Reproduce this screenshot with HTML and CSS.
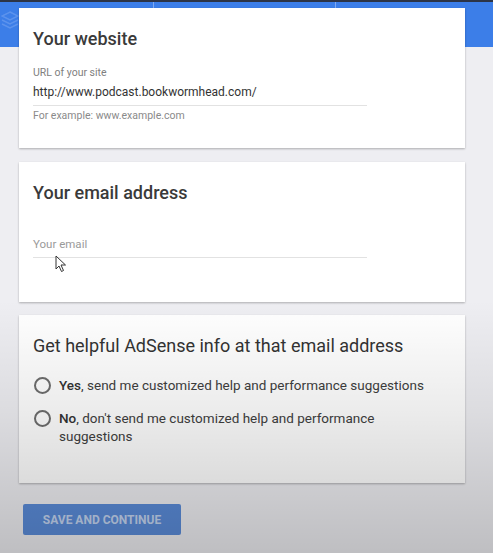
FILE: index.html
```html
<!DOCTYPE html>
<html lang="en">
<head>
    <meta charset="UTF-8">
    <meta name="viewport" content="width=device-width, initial-scale=1.0">
    <title>AdSense sign up</title>
    <link rel="stylesheet" href="styles.css">
</head>
<body>
    <div class="topbar"></div>
    <header class="band">
        <div class="tab tab-logo">
            <svg class="stack" width="18" height="20" viewBox="0 0 18 20">
                <path d="M9 2 L17 6 L9 10 L1 6 Z" fill="none" stroke="#6a9cf0" stroke-width="1.5"/>
                <path d="M1 10 L9 14 L17 10" fill="none" stroke="#6a9cf0" stroke-width="1.5"/>
                <path d="M1 14 L9 18 L17 14" fill="none" stroke="#6a9cf0" stroke-width="1.5"/>
            </svg>
        </div>
        <div class="tab tab-mid"></div>
        <div class="tab tab-end"></div>
    </header>

    <main class="content">
        <!-- Website -->
        <section class="card card-site">
            <h2 class="card-title">Your website</h2>
            <label class="field-label">URL of your site</label>
            <div class="field-value">http://www.podcast.bookwormhead.com/</div>
            <div class="field-hint">For example: www.example.com</div>
        </section>

        <!-- Email -->
        <section class="card card-email">
            <h2 class="card-title">Your email address</h2>
            <div class="field-value placeholder">Your email</div>
            <svg class="cursor" width="12" height="18" viewBox="0 0 12 18">
                <path d="M1 1 L1 14 L4 11 L6.5 16.5 L8.5 15.5 L6 10 L10.5 10 Z" fill="#fff" stroke="#333" stroke-width="1" stroke-linejoin="round"/>
            </svg>
        </section>

        <!-- Info -->
        <section class="card card-info">
            <h2 class="card-title light">Get helpful AdSense info at that email address</h2>
            <div class="option">
                <span class="radio"></span>
                <span class="option-text"><b>Yes</b>, send me customized help and performance suggestions</span>
            </div>
            <div class="option">
                <span class="radio"></span>
                <span class="option-text"><b>No</b>, don't send me customized help and performance suggestions</span>
            </div>
        </section>

        <button class="save" type="button">SAVE AND CONTINUE</button>
    </main>

    <div class="shade"></div>
</body>
</html>
```

FILE: styles.css
```css
body {
    font-family: Roboto, "Liberation Sans", Arial, sans-serif;
    margin: 0;
    padding: 0;
    background-color: #eeeef2;
    color: #333;
    height: 553px;
    overflow: hidden;
    position: relative;
}
.topbar {
    height: 2px;
    background: #2c3446;
}
.band {
    height: 45px;
    background: #3c7ee8;
    display: flex;
}
.tab {
    height: 100%;
}
.tab-logo {
    width: 153px;
    padding: 8px 0 0 1px;
    box-sizing: border-box;
}
.tab-mid {
    width: 181px;
    border-left: 1px solid #7fa9f0;
}
.tab-end {
    flex: 1;
    border-left: 1px solid #7fa9f0;
}
.stack {
    display: block;
    opacity: 0.7;
}
.content {
    margin-top: -39px;
    padding: 0 28px 0 19px;
    display: flex;
    flex-direction: column;
}
.card {
    background: #fff;
    box-shadow: 0 1px 2px rgba(0, 0, 0, 0.28);
    padding: 0 14px;
    box-sizing: border-box;
    position: relative;
}
.card-site {
    height: 140px;
}
.card-email {
    height: 140px;
    margin-top: 14px;
}
.card-info {
    height: 168px;
    margin-top: 13px;
}
.card-title {
    margin: 0;
    padding-top: 19px;
    font-size: 18px;
    font-weight: 500;
    line-height: 24px;
    color: #3a3a3a;
}
.card-title.light {
    font-weight: 400;
    color: #333;
}
.field-label {
    display: block;
    margin-top: 15px;
    font-size: 10.5px;
    color: #808080;
    line-height: 14px;
}
.field-value {
    width: 334px;
    font-size: 12px;
    line-height: 16px;
    padding: 4px 0 5px;
    border-bottom: 1px solid #e2e2e2;
    color: #333;
}
.field-value.placeholder {
    margin-top: 27px;
    font-size: 11.5px;
    color: #9a9a9a;
}
.field-hint {
    margin-top: 3px;
    font-size: 10.5px;
    color: #8a8a8a;
    line-height: 14px;
}
.cursor {
    position: absolute;
    left: 36px;
    top: 93px;
}
.option {
    display: flex;
    align-items: flex-start;
    gap: 8px;
    margin-top: 18px;
    padding-left: 1px;
}
.option + .option {
    margin-top: 15px;
}
.radio {
    width: 13px;
    height: 13px;
    border: 2px solid #6e6e6e;
    border-radius: 50%;
    flex-shrink: 0;
    margin-top: 1px;
}
.option-text {
    font-size: 13.5px;
    line-height: 18px;
    color: #404040;
    max-width: 376px;
}
.option-text b {
    font-weight: 500;
    color: #333;
}
.save {
    align-self: flex-start;
    margin: 21px 0 0 4px;
    width: 158px;
    height: 31px;
    border: 0;
    border-radius: 2px;
    background: #5a8bd8;
    color: #c4d5f0;
    font-family: Roboto, "Liberation Sans", Arial, sans-serif;
    font-size: 12px;
    font-weight: 700;
    padding: 0;
}
.shade {
    position: absolute;
    left: 0;
    right: 0;
    top: 300px;
    bottom: 0;
    background: linear-gradient(to bottom, rgba(0, 0, 0, 0) 0%, rgba(0, 0, 0, 0.08) 45%, rgba(0, 0, 0, 0.2) 100%);
    pointer-events: none;
}
```
